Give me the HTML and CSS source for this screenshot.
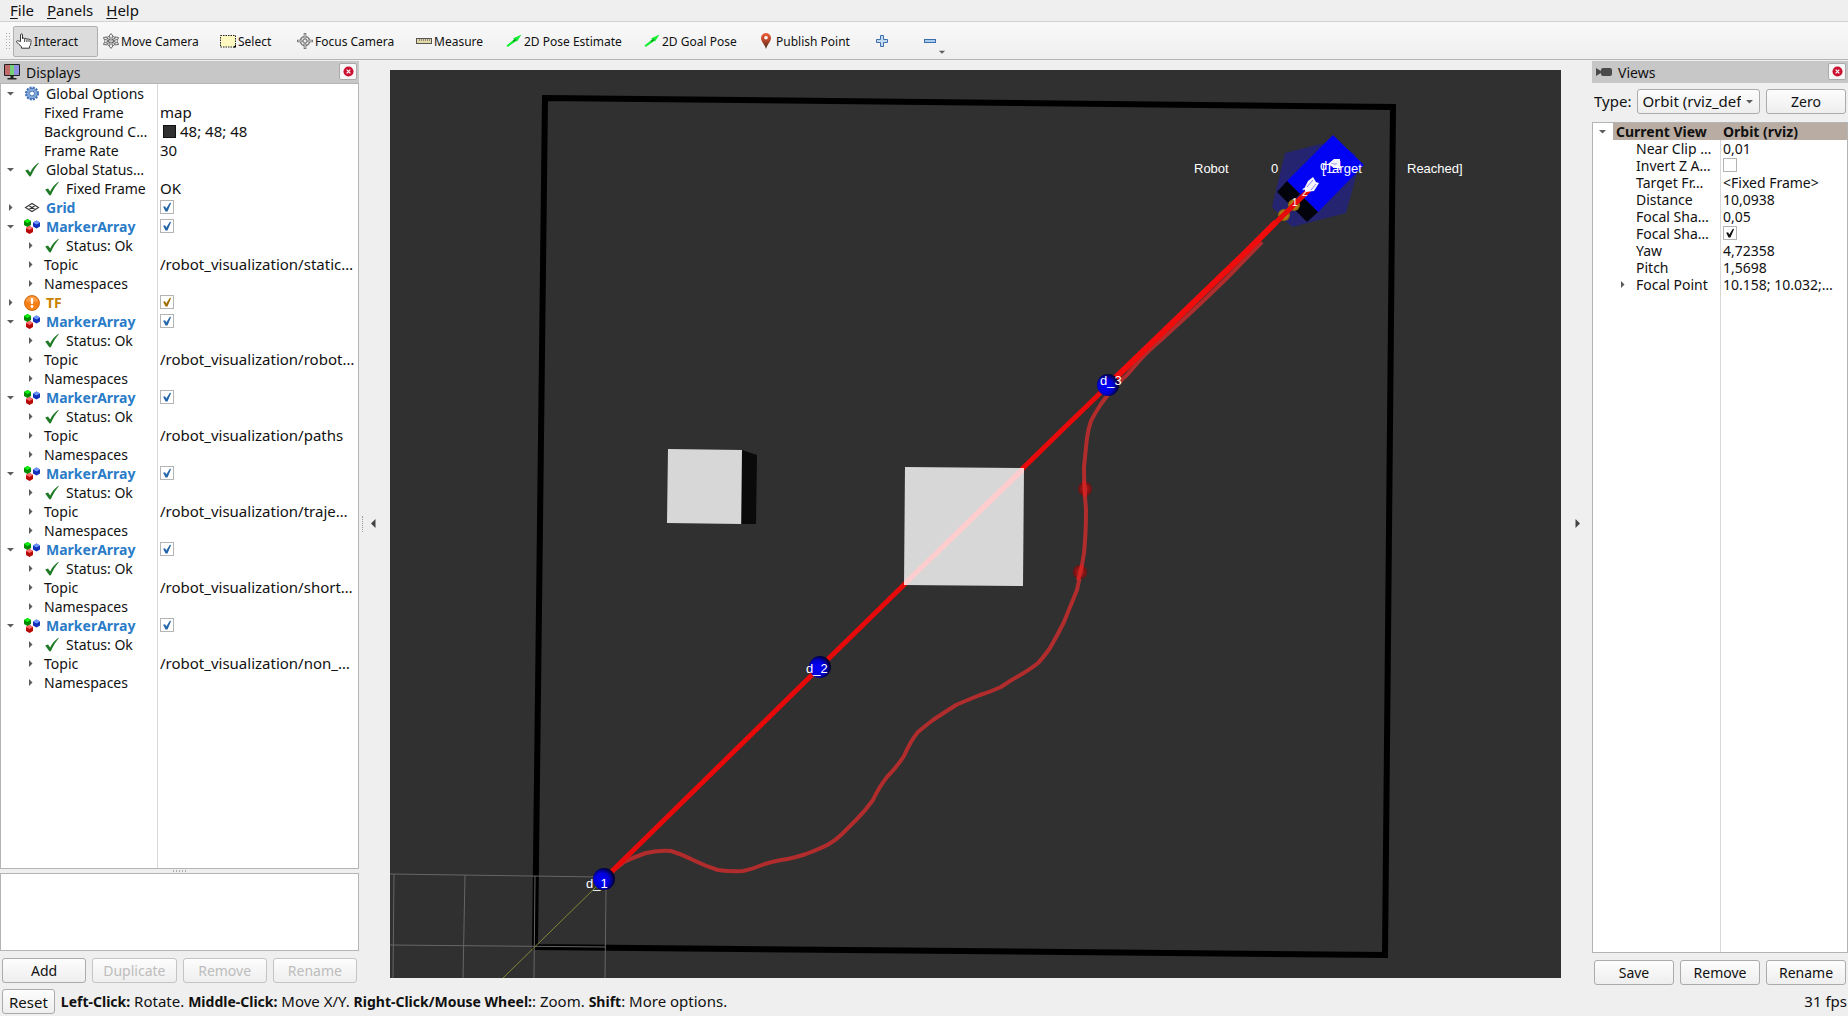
FILE: index.html
```html
<!DOCTYPE html>
<html lang="en">
<head>
<meta charset="utf-8">
<title>RViz</title>
<link rel="stylesheet" href="styles.css">
</head>
<body>
<svg class="defs" aria-hidden="true">
  <symbol id="open" viewBox="0 0 9 9"><path d="M1 3h7L4.500 6.500z" fill="#5c5c5c"/></symbol>
  <symbol id="closed" viewBox="0 0 9 9"><path d="M3 1v7l3.500-3.500z" fill="#5c5c5c"/></symbol>
  <symbol id="ok" viewBox="0 0 16 16"><path d="M1.200 8.500l2.800-1 2.200 3C8 6.500 11 3 14.500.8l.3.500C11.500 5 9 9.500 6.800 14.200l-1.300.2z" fill="#1f7a25"/></symbol>
  <symbol id="cubes" viewBox="0 0 16 16">
    <path d="M0 2l3.500-2L7 2v4L3.500 8 0 6z" fill="#008a00"/><path d="M0 2l3.500-2L7 2 3.500 4z" fill="#10f010"/>
    <path d="M9 3.500l3.500-2 3.500 2v4l-3.500 2-3.500-2z" fill="#1030b8"/><path d="M9 3.500l3.500-2 3.500 2-3.500 2z" fill="#6f96ff"/>
    <path d="M2 9l3.500-2L9 9v4l-3.500 2L2 13z" fill="#b80808"/><path d="M2 9l3.500-2L9 9l-3.500 2z" fill="#ff6c6c"/>
  </symbol>
  <symbol id="gear" viewBox="0 0 16 16"><circle cx="8" cy="7.500" r="6" fill="none" stroke="#3c6eb4" stroke-width="2" stroke-dasharray="2 1.140"/><circle cx="8" cy="7.500" r="5.200" fill="#a9c6ec" stroke="#3c6eb4"/><circle cx="8" cy="7.500" r="2.500" fill="#fff" stroke="#3c6eb4"/><circle cx="8" cy="7.500" r="3.700" fill="none" stroke="#5f8bc9" stroke-width=".7"/></symbol>
  <symbol id="grid" viewBox="0 0 16 16"><path d="M1.500 7.500L8 3.500l6.500 4L8 11.500zM4.700 5.500l6.500 4M11.300 5.500l-6.500 4" fill="none" stroke="#3a3a3a" stroke-width="1.100"/></symbol>
  <symbol id="warn" viewBox="0 0 16 16"><circle cx="8" cy="8" r="7.500" fill="#f57f17" stroke="#c65a00" stroke-width=".8"/><path d="M2 6.500a6 5 0 0 1 12 0z" fill="#ffab58" opacity=".7"/><rect x="6.800" y="3" width="2.400" height="6" rx="1" fill="#fff"/><circle cx="8" cy="11.500" r="1.400" fill="#fff"/></symbol>
  <symbol id="arrow" viewBox="0 0 16 16"><path d="M.5 12.500L8 6.500 7 5.500 15.500 1.500 11 8.500 10.200 8 1.800 14z" fill="#12ee32"/><path d="M7 8.500l3-2" stroke="#0a8a1c" stroke-width="1.500"/></symbol>
  <symbol id="cross" viewBox="0 0 12 12"><circle cx="6" cy="6" r="5.500" fill="#cb1030"/><path d="M4 4l4 4M8 4L4 8" stroke="#fff" stroke-width="1.300"/></symbol>
  <symbol id="move" viewBox="0 0 16 16"><g fill="#f6f6f6" stroke="#555" stroke-width=".9"><path d="M8 .6l2.500 3.200H9v2.400L11.500 8 9 9.800v2.400h1.500L8 15.400l-2.500-3.200H7V9.800L4.500 8 7 6.200V3.800H5.500z"/><path d="M.5 4.500l4-.6-.7 1.400L8 7.200l4.200-1.900-.7-1.400 4 .6-1.200 3-.7-1L9.500 8l4.100 1.600.7-1 1.200 2.900-4 .4.700-1.300L8 9l-4.200 1.600.7 1.300-4-.4L1.700 8.600l.7 1L6.500 8 2.400 6.400l-.7 1z"/></g></symbol>
  <symbol id="focus" viewBox="0 0 16 16"><circle cx="8" cy="8" r="4.600" fill="none" stroke="#777" stroke-width="1.500"/><path d="M8 0v16M0 8h16" stroke="#777" stroke-width="2.600"/><path d="M8 1v14M1 8h14" stroke="#ddd" stroke-width="1"/><circle cx="8" cy="8" r="2" fill="#eee" stroke="#777"/></symbol>
  <symbol id="hand" viewBox="0 0 16 16"><path d="M4.500 8.500V1.800c0-1.200 2-1.200 2 0v4c.2-1 2-1 2.200.2.300-.9 2-.8 2.200.3.400-.8 2-.6 2.100.4.500-.6 2-.4 2 .8 0 3-.3 4.500-1.500 6v1.700H5.500v-1.500C4 12.500 2 10.500.8 9.200c-.9-1 .6-2 1.700-1.200zM8.700 6v3M10.900 6.500V9M13 7v2" fill="#fff" stroke="#222" stroke-width=".9"/></symbol>
  <symbol id="select" viewBox="0 0 16 16"><rect x=".5" y="2.500" width="15" height="11.500" fill="#fdf7c0" stroke="#222" stroke-dasharray="1.500 1"/><path d="M13 14.500h3v-3z" fill="#000"/></symbol>
  <symbol id="ruler" viewBox="0 0 16 16"><rect x=".5" y="5.500" width="15" height="5" fill="#e4d9a6" stroke="#555"/><path d="M3.500 6v2M5.500 6v2M7.500 6v2M9.500 6v2M11.500 6v2M13.500 6v2" stroke="#777" stroke-width=".8"/></symbol>
  <symbol id="pin" viewBox="0 0 16 16"><path d="M8 16C6.500 11 3 8.500 3 5a5 5 0 0 1 10 0c0 3.500-3.500 6-5 11z" fill="url(#pinfill)"/><circle cx="8" cy="4.800" r="1.800" fill="#fff"/></symbol>
  <symbol id="plus" viewBox="0 0 16 16"><path d="M6.500 2.500h3v4h4v3h-4v4h-3v-4h-4v-3h4z" fill="#c2daf2" stroke="#3f6fab"/></symbol>
  <symbol id="minus" viewBox="0 0 16 16"><rect x="2.500" y="6.500" width="11" height="3" fill="#a9cbee" stroke="#3f6fab"/></symbol>
  <symbol id="screen" viewBox="0 0 16 16"><rect width="16" height="12" rx="1" fill="#222"/><path d="M1 1h5v10H1z" fill="#c06a6a"/><path d="M6 1h4v10H6z" fill="#77cf77"/><path d="M10 1h5v10h-5z" fill="#8f8fe0"/><path d="M6.500 12h3v2h3v1.500h-9V14h3z" fill="#222"/></symbol>
  <symbol id="camera" viewBox="0 0 16 16"><rect x="5" y="4" width="11" height="8" rx="2" fill="#4a4a4a"/><path d="M0 4l5 3v2l-5 3z" fill="#4a4a4a"/></symbol>
  <linearGradient id="pinfill" x1="0" y1="0" x2="0" y2="1"><stop offset="0" stop-color="#f0603a"/><stop offset=".5" stop-color="#b04428"/><stop offset="1" stop-color="#3a2a14"/></linearGradient>
</svg>

<nav class="menubar">
  <a href="#"><u>F</u>ile</a><a href="#"><u>P</u>anels</a><a href="#"><u>H</u>elp</a>
</nav>

<div class="toolbar">
  <span class="grip"></span>
  <button class="tool active"><svg><use href="#hand"/></svg>Interact</button>
  <button class="tool"><svg><use href="#move"/></svg>Move Camera</button>
  <button class="tool"><svg><use href="#select"/></svg>Select</button>
  <button class="tool"><svg><use href="#focus"/></svg>Focus Camera</button>
  <button class="tool"><svg><use href="#ruler"/></svg>Measure</button>
  <button class="tool"><svg><use href="#arrow"/></svg>2D Pose Estimate</button>
  <button class="tool"><svg><use href="#arrow"/></svg>2D Goal Pose</button>
  <button class="tool"><svg><use href="#pin"/></svg>Publish Point</button>
  <button class="tool" aria-label="Add tool"><svg><use href="#plus"/></svg></button>
  <button class="tool" aria-label="Remove tool"><svg><use href="#minus"/></svg><svg class="drop"><use href="#open"/></svg></button>
</div>

<main class="workspace">
  <section class="panel displays">
    <header class="title"><svg class="icon"><use href="#screen"/></svg><h2>Displays</h2><button class="close" aria-label="Close Displays"><svg><use href="#cross"/></svg></button></header>
    <div class="tree">
      <table>
        <tr><td><div class="name"><svg class="exp"><use href="#open"/></svg><svg class="icon"><use href="#gear"/></svg>Global Options</div></td><td></td></tr>
        <tr><td><div class="name deep">Fixed Frame</div></td><td>map</td></tr>
        <tr><td><div class="name deep">Background C…</div></td><td><span class="swatch"></span>48; 48; 48</td></tr>
        <tr><td><div class="name deep">Frame Rate</div></td><td>30</td></tr>
        <tr><td><div class="name"><svg class="exp"><use href="#open"/></svg><svg class="icon"><use href="#ok"/></svg>Global Status…</div></td><td></td></tr>
        <tr><td><div class="name deep"><svg class="icon"><use href="#ok"/></svg>Fixed Frame</div></td><td>OK</td></tr>
        <tr><td><div class="name display"><svg class="exp"><use href="#closed"/></svg><svg class="icon"><use href="#grid"/></svg><label for="c0">Grid</label></div></td><td><input id="c0" type="checkbox" checked></td></tr>
        <tr><td><div class="name display"><svg class="exp"><use href="#open"/></svg><svg class="icon"><use href="#cubes"/></svg><label for="c1">MarkerArray</label></div></td><td><input id="c1" type="checkbox" checked></td></tr>
        <tr><td><div class="name child"><svg class="exp"><use href="#closed"/></svg><svg class="icon"><use href="#ok"/></svg>Status: Ok</div></td><td></td></tr>
        <tr><td><div class="name child"><svg class="exp"><use href="#closed"/></svg>Topic</div></td><td>/robot_visualization/static…</td></tr>
        <tr><td><div class="name child"><svg class="exp"><use href="#closed"/></svg>Namespaces</div></td><td></td></tr>
        <tr class="warning"><td><div class="name display"><svg class="exp"><use href="#closed"/></svg><svg class="icon"><use href="#warn"/></svg><label for="c2">TF</label></div></td><td><input id="c2" type="checkbox" checked></td></tr>
        <tr><td><div class="name display"><svg class="exp"><use href="#open"/></svg><svg class="icon"><use href="#cubes"/></svg><label for="c3">MarkerArray</label></div></td><td><input id="c3" type="checkbox" checked></td></tr>
        <tr><td><div class="name child"><svg class="exp"><use href="#closed"/></svg><svg class="icon"><use href="#ok"/></svg>Status: Ok</div></td><td></td></tr>
        <tr><td><div class="name child"><svg class="exp"><use href="#closed"/></svg>Topic</div></td><td>/robot_visualization/robot…</td></tr>
        <tr><td><div class="name child"><svg class="exp"><use href="#closed"/></svg>Namespaces</div></td><td></td></tr>
        <tr><td><div class="name display"><svg class="exp"><use href="#open"/></svg><svg class="icon"><use href="#cubes"/></svg><label for="c4">MarkerArray</label></div></td><td><input id="c4" type="checkbox" checked></td></tr>
        <tr><td><div class="name child"><svg class="exp"><use href="#closed"/></svg><svg class="icon"><use href="#ok"/></svg>Status: Ok</div></td><td></td></tr>
        <tr><td><div class="name child"><svg class="exp"><use href="#closed"/></svg>Topic</div></td><td>/robot_visualization/paths</td></tr>
        <tr><td><div class="name child"><svg class="exp"><use href="#closed"/></svg>Namespaces</div></td><td></td></tr>
        <tr><td><div class="name display"><svg class="exp"><use href="#open"/></svg><svg class="icon"><use href="#cubes"/></svg><label for="c5">MarkerArray</label></div></td><td><input id="c5" type="checkbox" checked></td></tr>
        <tr><td><div class="name child"><svg class="exp"><use href="#closed"/></svg><svg class="icon"><use href="#ok"/></svg>Status: Ok</div></td><td></td></tr>
        <tr><td><div class="name child"><svg class="exp"><use href="#closed"/></svg>Topic</div></td><td>/robot_visualization/traje…</td></tr>
        <tr><td><div class="name child"><svg class="exp"><use href="#closed"/></svg>Namespaces</div></td><td></td></tr>
        <tr><td><div class="name display"><svg class="exp"><use href="#open"/></svg><svg class="icon"><use href="#cubes"/></svg><label for="c6">MarkerArray</label></div></td><td><input id="c6" type="checkbox" checked></td></tr>
        <tr><td><div class="name child"><svg class="exp"><use href="#closed"/></svg><svg class="icon"><use href="#ok"/></svg>Status: Ok</div></td><td></td></tr>
        <tr><td><div class="name child"><svg class="exp"><use href="#closed"/></svg>Topic</div></td><td>/robot_visualization/short…</td></tr>
        <tr><td><div class="name child"><svg class="exp"><use href="#closed"/></svg>Namespaces</div></td><td></td></tr>
        <tr><td><div class="name display"><svg class="exp"><use href="#open"/></svg><svg class="icon"><use href="#cubes"/></svg><label for="c7">MarkerArray</label></div></td><td><input id="c7" type="checkbox" checked></td></tr>
        <tr><td><div class="name child"><svg class="exp"><use href="#closed"/></svg><svg class="icon"><use href="#ok"/></svg>Status: Ok</div></td><td></td></tr>
        <tr><td><div class="name child"><svg class="exp"><use href="#closed"/></svg>Topic</div></td><td>/robot_visualization/non_…</td></tr>
        <tr><td><div class="name child"><svg class="exp"><use href="#closed"/></svg>Namespaces</div></td><td></td></tr>
      </table>
    </div>
    <div class="splitter"></div>
    <div class="description"></div>
    <div class="actions">
      <button class="btn">Add</button><button class="btn" disabled>Duplicate</button><button class="btn" disabled>Remove</button><button class="btn" disabled>Rename</button>
    </div>
  </section>

  <div class="gutter left"><span class="dots"></span><svg class="fold" viewBox="0 0 9 9"><path d="M6.500 0v9L2 4.500z" fill="#444"/></svg></div>

  <svg class="view" viewBox="390 70 1171 908" preserveAspectRatio="xMidYMid slice" role="img" aria-label="Robot scene">
    <defs>
      <radialGradient id="ball" cx=".4" cy=".55" r=".6"><stop offset="0" stop-color="#0000ff"/><stop offset=".55" stop-color="#0000d8"/><stop offset="1" stop-color="#000022"/></radialGradient>
      <radialGradient id="redball"><stop offset="0" stop-color="#c01c1c"/><stop offset="1" stop-color="#681212"/></radialGradient>
      <radialGradient id="gold"><stop offset="0" stop-color="#e0a818"/><stop offset="1" stop-color="#8a620c"/></radialGradient>
    </defs>
    <path d="M545 98L1393 107 1385 955 535 947z" fill="none" stroke="#000" stroke-width="6"/>
    <path d="M390 874L600 877M390 945L606 947M394 874L393 978M465 875L463 978M535 876L534 978M606 888L605 978" fill="none" stroke="#666"/>
    <path d="M503 978L597 886" stroke="#85853a" stroke-width="1"/>
    <path d="M668 449L742 450 741 524 667 523z" fill="#d7d7d7"/><path d="M742 450L757 455 756 524H742z" fill="#0a0a0a"/>
    <path d="M604 879Q617 867 624 862 632 858 646 853 660 850 671 851 681 854 693 860 705 866 718 870 732 872 743 871 753 869 762 865 770 862 781 860 791 859 806 854 822 848 829 844 836 840 842 834 849 827 857 819 865 811 873 800 879 787 887 777 896 768 904 756 911 740 918 732 925 726 933 720 942 714 956 705 970 699 980 695 990 692 1001 687 1011 680 1022 674 1032 668 1038 663 1043 658 1050 648 1057 636 1064 622 1070 607 1077 590 1081 573 1084 553 1086 533 1086 510 1084 487 1084 467 1086 447 1087 438 1088 430 1091 421 1095 413 1101 404 1107 396 1113 388 1120 381 1127 375 1133 368 1140 360 1148 351 1161 340 1173 329 1186 317L1200 304 1227 278 1262 242" fill="none" stroke="#b12c2c" stroke-width="4"/>
    <circle cx="1085" cy="489" r="7" fill="url(#redball)"/><circle cx="1080" cy="572" r="7" fill="url(#redball)"/>
    <path d="M1084 481Q1085 489 1085 497M1082 565Q1080 574 1078 580" fill="none" stroke="#d02424" stroke-width="4"/>
    <path d="M1285 153L1333 141 1355 154 1357 173 1346 213 1292 227 1272 207z" fill="#242470"/>
    <path d="M1333 135L1364 165 1318 212 1287 181z" fill="#0303f4"/>
    <path d="M1287 181L1318 212 1307 222 1277 192z" fill="#03030b"/>
    <path d="M1300 194L1304 198 1293 208 1290 204z" fill="#242470"/>
    <circle cx="1294" cy="205" r="6" fill="url(#gold)"/><circle cx="1284" cy="215" r="6" fill="url(#gold)"/>
    <path d="M604 879L820 667 1060 432 1247 251 1309 190" fill="none" stroke="#e60a0a" stroke-width="5"/>
    <path d="M1108 385L1247 251 1276 222" fill="none" stroke="#ee0c0c" stroke-width="6"/>
    <path d="M905 467L1024 468 1023 586 904 585z" fill="#d7d7d7"/>
    <path d="M1020 468H1024V472L907 585H904V581z" fill="#ffcdcd"/>
    <circle cx="604" cy="879" r="11" fill="url(#ball)"/><circle cx="820" cy="667" r="11" fill="url(#ball)"/><circle cx="1108" cy="385" r="11" fill="url(#ball)"/>
    <path d="M1304 189L1308 181 1313 177 1316 182 1319 183 1314 191 1306 192zM1328 164L1334 159 1340 159 1340 167 1334 168z" fill="#f4f4ff"/>
    <path d="M1307 187L1313 180M1311 190L1316 184M1331 164H1338" stroke="#8a8af0" fill="none"/>
    <g class="scene-text">
      <text x="1194" y="173">Robot</text><text x="1271" y="173">0</text><text x="1322" y="173">[Target</text><text x="1407" y="173">Reached]</text>
      <text x="586" y="888">d_1</text><text x="806" y="673">d_2</text><text x="1100" y="385">d_3</text><text x="1320" y="170">d_4</text>
      <text class="tiny" x="1292" y="206">1</text><text class="tiny" x="1302" y="196">2</text>
    </g>
  </svg>

  <div class="gutter right"><svg class="fold" viewBox="0 0 9 9"><path d="M2.500 0v9L7 4.500z" fill="#444"/></svg></div>

  <section class="panel views">
    <header class="title"><svg class="icon"><use href="#camera"/></svg><h2>Views</h2><button class="close" aria-label="Close Views"><svg><use href="#cross"/></svg></button></header>
    <div class="type-row">
      <label for="type">Type:</label>
      <div class="select"><select id="type"><option>Orbit (rviz_default_plugins)</option></select><svg><use href="#open"/></svg></div>
      <button class="btn">Zero</button>
    </div>
    <div class="tree">
      <table>
        <tr class="current"><td><div class="name"><svg class="exp"><use href="#open"/></svg><span>Current View</span></div></td><td>Orbit (rviz)</td></tr>
        <tr><td><div class="name deep">Near Clip …</div></td><td>0,01</td></tr>
        <tr><td><div class="name deep"><label for="v1">Invert Z A…</label></div></td><td><input id="v1" type="checkbox"></td></tr>
        <tr><td><div class="name deep">Target Fr…</div></td><td>&lt;Fixed Frame&gt;</td></tr>
        <tr><td><div class="name deep">Distance</div></td><td>10,0938</td></tr>
        <tr><td><div class="name deep">Focal Sha…</div></td><td>0,05</td></tr>
        <tr><td><div class="name deep"><label for="v2">Focal Sha…</label></div></td><td><input id="v2" type="checkbox" checked></td></tr>
        <tr><td><div class="name deep">Yaw</div></td><td>4,72358</td></tr>
        <tr><td><div class="name deep">Pitch</div></td><td>1,5698</td></tr>
        <tr><td><div class="name child"><svg class="exp"><use href="#closed"/></svg>Focal Point</div></td><td>10.158; 10.032;…</td></tr>
      </table>
    </div>
    <div class="actions"><button class="btn">Save</button><button class="btn">Remove</button><button class="btn">Rename</button></div>
  </section>
</main>

<footer class="status">
  <button class="btn">Reset</button>
  <p><b>Left-Click:</b> Rotate. <b>Middle-Click:</b> Move X/Y. <b>Right-Click/Mouse Wheel:</b>: Zoom. <b>Shift</b>: More options.</p>
  <span class="fps">31 fps</span>
</footer>
</body>
</html>
```
FILE: styles.css
```css
* { box-sizing: border-box; }
body {
  margin: 0;
  height: 100vh;
  display: flex;
  flex-direction: column;
  background: #efefef;
  color: #111;
  font: 14px/19px "Noto Sans", "Open Sans", sans-serif;
  overflow: hidden;
}
button, select { font: inherit; color: inherit; }
.defs { position: absolute; width: 0; height: 0; }
svg { flex: none; }

.menubar {
  display: flex;
  gap: 13px;
  padding: 0 10px;
  height: 22px;
  line-height: 20px;
  font-size: 15px;
  border-bottom: 1px solid #d2d2d2;
}
.menubar a { color: inherit; text-decoration: none; }
.menubar u { text-underline-offset: 2px; }

.toolbar {
  display: grid;
  grid-template-columns: 6px 85px 115px 75px 117px 88px 136px 112px 114px 46px 46px;
  column-gap: 2px;
  align-items: center;
  padding: 1px 0 0 5px;
  height: 38px;
  background: linear-gradient(#f9f9f9, #efefef);
  border-bottom: 1px solid #b4b4b4;
  font-size: 12px;
}
.grip {
  width: 5px;
  height: 18px;
  background: radial-gradient(circle, #aaa 0 1px, transparent 1px) 0 0 / 3px 3px;
}
.tool {
  position: relative;
  display: flex;
  align-items: center;
  gap: 2px;
  height: 31px;
  padding: 0 2px;
  border: 1px solid transparent;
  border-radius: 2px;
  background: none;
  white-space: nowrap;
}
.tool.active { background: #dcdcdc; border-color: #b0b0b0; }
.tool svg { width: 16px; height: 16px; }
.tool .drop { position: absolute; left: 18px; bottom: 0; width: 8px; height: 8px; }

.workspace { flex: 1; min-height: 0; display: flex; padding-top: 1px; }
.panel { flex: none; display: flex; flex-direction: column; }
.displays { width: 359px; --column: 157px; --row: 19px; --indent: 20px; }
.views { width: 256px; --column: 128px; --row: 17px; --indent: 20px; }

.title {
  display: flex;
  align-items: center;
  height: 22px;
  padding: 0 2px 0 4px;
  background: #c7c7c7;
}
.title h2 { flex: 1; margin: 0 0 0 6px; font-size: 14px; font-weight: 400; }
.close {
  display: grid;
  place-items: center;
  width: 18px;
  height: 17px;
  margin-bottom: 2px;
  padding: 0;
  border: 1px solid #aaa;
  border-radius: 2px;
  background: #f7f7f7;
}
.close svg { width: 11px; height: 11px; }

.tree {
  flex: 1;
  min-height: 0;
  border: 1px solid #b4b4b4;
  background: linear-gradient(#d8d8d8, #d8d8d8) calc(var(--column) - 1px) 0 / 1px 100% no-repeat #fff;
  overflow: hidden;
}
table { width: 100%; border-collapse: collapse; table-layout: fixed; }
td { height: var(--row); padding: 0 0 0 2px; line-height: var(--row); white-space: nowrap; overflow: hidden; }
td:first-child { width: var(--column); padding: 0; }
.displays td:last-child { font-size: 15px; }
.name { display: flex; align-items: center; height: var(--row); }
.exp { width: 9px; height: 9px; margin: 0 9px 0 5px; }
.icon { width: 16px; height: 16px; }
.name .icon { margin-right: 6px; }
.child { padding-left: var(--indent); }
.deep { padding-left: 43px; }
.display { font-weight: 700; color: #2a7bc8; }
.warning .display { color: #c88200; }
.swatch {
  display: inline-block;
  width: 13px;
  height: 13px;
  margin: 0 4px 0 3px;
  border: 1px solid #111;
  background: #303030;
  vertical-align: -1px;
}
input[type="checkbox"] {
  appearance: none;
  display: block;
  width: 14px;
  height: 14px;
  margin: 0 0 1px;
  border: 1px solid #b4b4b4;
  background: #fff;
  color: #2264a8;
}
.warning input[type="checkbox"] { color: #a06c00; }
.views input[type="checkbox"] { color: #111; }
input:checked::before {
  content: "";
  display: block;
  width: 12px;
  height: 12px;
  background: currentColor;
  clip-path: polygon(18% 48%, 34% 44%, 44% 62%, 74% 14%, 84% 16%, 54% 88%, 38% 88%);
}
.current { background: linear-gradient(#b9aca2, #b9aca2) 20px 0 no-repeat; font-weight: 700; }

.splitter { height: 4px; background: radial-gradient(circle, #aaa 0 1px, transparent 1px) center / 3px 4px; margin: 0 171px; }
.description { height: 78px; border: 1px solid #b4b4b4; background: #fff; }
.actions { display: flex; gap: 6px; padding: 7px 2px 2px; }
.displays .actions { padding-bottom: 4px; }
.actions .btn { flex: 1; }
.btn {
  height: 25px;
  padding: 0 6px;
  border: 1px solid #ababab;
  border-radius: 3px;
  background: linear-gradient(#fdfdfd, #eee);
  line-height: 20px;
}
.btn:disabled { color: #bdbdbd; border-color: #c4c4c4; }

.gutter { position: relative; flex: none; width: 31px; }
.fold { position: absolute; top: 50%; width: 9px; height: 9px; margin-top: -5px; }
.left .fold { left: 10px; }
.right .fold { left: 12px; }
.dots { position: absolute; top: 50%; left: 3px; height: 16px; margin-top: -8px; border-left: 1px dotted #999; }
.view { flex: 1; min-width: 0; margin: 9px 0; height: auto; background: #303030; }
.scene-text { font: 13px "Liberation Sans", sans-serif; fill: #fff; }
.scene-text .tiny { font-size: 10px; }

.type-row { display: flex; align-items: center; gap: 6px; padding: 6px 2px 8px; font-size: 15px; }
.type-row .btn { width: 80px; font-size: 14px; }
.select { position: relative; flex: 1; min-width: 0; }
.select select {
  appearance: none;
  display: block;
  width: 100%;
  height: 25px;
  padding: 0 18px 0 4px;
  border: 1px solid #ababab;
  border-radius: 3px;
  background: linear-gradient(#fdfdfd, #eee);
}
.select svg { position: absolute; right: 6px; top: 8px; width: 9px; height: 9px; pointer-events: none; }

.status { display: flex; align-items: center; gap: 6px; height: 29px; padding: 0 1px 0 2px; font-size: 15px; }
.status p { flex: 1; margin: 0; }
.status b { font-size: 14px; }
```
